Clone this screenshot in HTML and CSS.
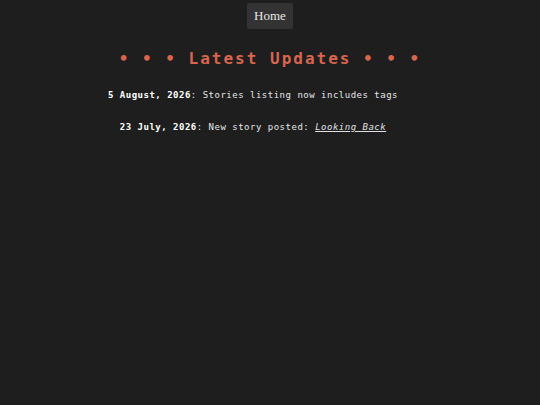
FILE: index.html
```html
<!DOCTYPE html>
<html>
<head>
<meta charset="utf-8">
<link rel="stylesheet" href="styles.css">
</head>
<body>
<nav class="nav"><a class="nav-link" href="#">Home</a></nav>
<h1 class="title">• • • Latest Updates • • •</h1>
<div class="updates">
  <p class="entry"><b>5 August, 2026</b>: Stories listing now includes tags</p>
  <p class="entry"><b>23 July, 2026</b>: New story posted: <a class="story" href="#">Looking Back</a></p>
</div>
</body>
</html>
```
FILE: styles.css
```css
html, body {
  margin: 0;
  padding: 0;
  background: #1e1e1e;
}
body {
  color: #e6e6e6;
  font-family: "DejaVu Sans Mono", monospace;
}
.nav {
  display: flex;
  justify-content: center;
  padding-top: 3px;
}
.nav-link {
  display: block;
  background: #333333;
  color: #e8e8e8;
  font-family: "Liberation Serif", serif;
  font-size: 13px;
  line-height: 16px;
  padding: 5px 7px;
  text-decoration: none;
  border-radius: 2px;
}
.title {
  margin: 20px 0 0 0;
  text-align: center;
  color: #d9654f;
  font-size: 16px;
  letter-spacing: 2px;
  line-height: 20px;
  font-weight: bold;
}
.updates {
  margin-top: 20px;
  padding-right: 34px;
  text-align: center;
  font-size: 9px;
  letter-spacing: 0.5px;
  line-height: 12px;
}
.entry {
  margin: 0 0 20px 0;
}
.entry b {
  font-weight: bold;
  color: #ffffff;
}
.story {
  color: #e0e0e0;
  font-style: italic;
  text-decoration: underline;
}
```
